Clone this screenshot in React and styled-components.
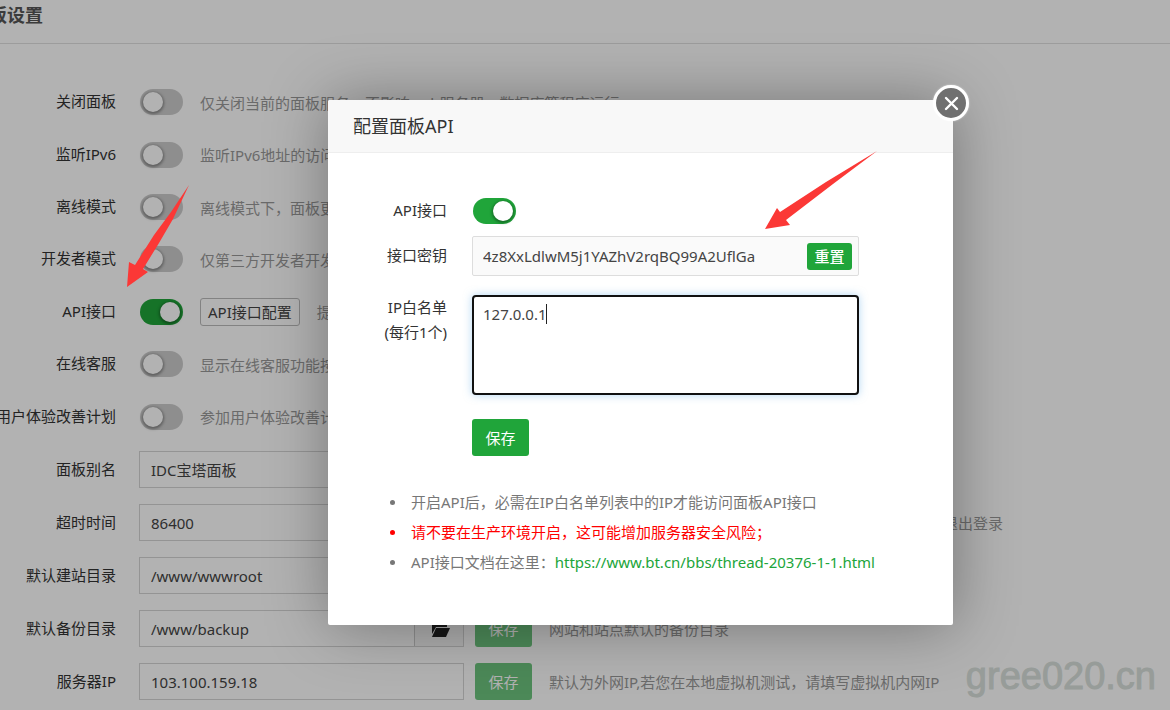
import React, { useState } from 'react';
import styled, { createGlobalStyle } from 'styled-components';

const GlobalStyle = createGlobalStyle`
  * {
    box-sizing: border-box;
  }
  body {
    margin: 0;
    background: #fff;
    color: #333;
    font-family: "Noto Sans", "Noto Sans CJK SC", sans-serif;
    font-size: 15px;
  }
  input, textarea, button {
    font: inherit;
  }
`;

const Page = styled.div`
  position: relative;
  height: 100vh;
  overflow: hidden;
`;

const PageHeader = styled.header`
  display: flex;
  height: 44px;
  border-bottom: 1px solid #e0e0e0;
`;

const PageTitle = styled.h1`
  display: flex;
  justify-content: flex-end;
  width: 43px;
  margin: 0;
  font-size: 18px;
  line-height: 30px;
  white-space: nowrap;
  color: #555;
`;

const Settings = styled.form`
  padding-top: 32px;
`;

const SwitchRows = styled.div`
  display: grid;
  grid-template-rows: repeat(7, 1fr);
  height: 367px;
`;

const Row = styled.div`
  display: flex;
  align-items: center;
  white-space: nowrap;
`;

const FieldRow = styled(Row)`
  height: 53px;
`;

const Label = styled.label`
  display: flex;
  justify-content: flex-end;
  flex: none;
  width: 116px;
  margin-right: 23px;
  padding-bottom: 2px;
  line-height: 24px;
`;

const Switch = styled.input.attrs({ type: 'checkbox' })`
  appearance: none;
  flex: none;
  display: flex;
  align-items: center;
  width: 43px;
  height: 26px;
  margin: 0 0 0 1px;
  padding: 0 3px;
  border-radius: 13px;
  background: #ccc;
  cursor: pointer;
  &::before {
    content: '';
    width: 20px;
    height: 20px;
    border-radius: 50%;
    background: #fff;
    box-shadow: 0 1px 3px 1px rgba(0, 0, 0, .35);
  }
  &:checked {
    justify-content: flex-end;
    background: #20a53a;
  }
`;

const Hint = styled.span`
  margin-left: 17px;
  color: #999;
`;

const ConfigButton = styled.button`
  height: 28px;
  margin-left: 17px;
  padding: 0 7px;
  border: 1px solid #bbb;
  border-radius: 3px;
  background: #fff;
  color: #444;
  line-height: 24px;
`;

const InputGroup = styled.div`
  display: flex;
  flex: none;
  width: 325px;
  height: 37px;
  border: 1px solid #d5d5d5;
`;

const TextInput = styled.input`
  flex: 1;
  min-width: 0;
  padding: 0 11px;
  border: 0;
  background: transparent;
  color: #444;
  outline: 0;
`;

const FolderButton = styled.button`
  display: flex;
  align-items: center;
  justify-content: center;
  width: 49px;
  padding: 0 0 0 4px;
  border: 0;
  border-left: 1px solid #ccc;
  background: #f8f8f8;
`;

const SaveButton = styled.button`
  flex: none;
  width: 57px;
  height: 37px;
  padding: 0 0 1px;
  border: 0;
  border-radius: 3px;
  background: #20a53a;
  color: #fff;
`;

const RowSaveButton = styled(SaveButton)`
  margin-left: 11px;
  opacity: .65;
`;

const Overlay = styled.div`
  position: absolute;
  inset: 0;
  display: flex;
  align-items: flex-start;
  justify-content: center;
  padding: 100px 0 0 111px;
  background: rgba(0, 0, 0, .3);
`;

const Dialog = styled.section`
  position: relative;
  width: 625px;
  padding-bottom: 48px;
  border-radius: 2px;
  background: #fff;
  box-shadow: 1px 1px 62px rgba(0, 0, 0, .35);
`;

const DialogTitle = styled.h2`
  height: 53px;
  margin: 0;
  padding: 0 25px;
  border-bottom: 1px solid #eee;
  border-radius: 2px 2px 0 0;
  background: #f8f8f8;
  font-size: 18px;
  font-weight: 400;
  line-height: 52px;
`;

const CloseButton = styled.button`
  position: absolute;
  top: -15px;
  right: -16px;
  display: flex;
  align-items: center;
  justify-content: center;
  width: 36px;
  height: 36px;
  padding: 0;
  border: 3px solid #fff;
  border-radius: 50%;
  background: #707070;
  box-shadow: 0 0 2px rgba(255, 255, 255, .6);
`;

const DialogForm = styled.form`
  display: grid;
  grid-template-columns: 119px 387px;
  column-gap: 25px;
  padding-top: 45px;
`;

const DialogLabel = styled.label`
  line-height: 25px;
  text-align: right;
`;

const KeyLabel = styled(DialogLabel)`
  padding-top: 19px;
`;

const WhitelistLabel = styled(DialogLabel)`
  padding-top: 19px;
`;

const KeyBox = styled.div`
  display: flex;
  align-items: center;
  height: 40px;
  margin-top: 12px;
  padding-right: 6px;
  border: 1px solid #ddd;
  border-radius: 2px;
  background: #fafafa;
`;

const KeyInput = styled(TextInput)`
  padding: 0 10px;
`;

const ResetButton = styled(SaveButton)`
  width: 45px;
  height: 27px;
  font-weight: 500;
`;

const WhitelistBox = styled.div`
  position: relative;
  height: 100px;
  margin-top: 19px;
`;

const Whitelist = styled.textarea`
  display: block;
  width: 100%;
  height: 100%;
  padding: 5px 9px;
  border: 2px solid #111;
  border-radius: 4px;
  color: #444;
  line-height: 24px;
  resize: none;
  outline: 0;
  caret-color: transparent;
  box-shadow: 0 0 9px rgba(102, 175, 233, .5);
`;

const Caret = styled.span`
  position: absolute;
  top: 9px;
  left: 74px;
  width: 1px;
  height: 20px;
  background: #222;
`;

const DialogSaveButton = styled(SaveButton)`
  grid-column: 2;
  margin-top: 24px;
`;

const Notes = styled.ul`
  margin: 31px 0 0;
  padding-left: 62px;
  line-height: 30px;
  list-style: none;
`;

const Note = styled.li`
  display: flex;
  align-items: center;
  color: ${props => props.$warning ? '#f00' : '#777'};
  &::before {
    content: '';
    width: 5px;
    height: 5px;
    margin-right: 16px;
    border-radius: 50%;
    background: currentColor;
  }
`;

const NoteLink = styled.a`
  color: #20a53a;
  text-decoration: none;
`;

const Arrows = styled.svg`
  position: absolute;
  top: 0;
  left: 0;
  width: 1170px;
  height: 710px;
  pointer-events: none;
`;

const Watermark = styled.span`
  position: absolute;
  right: 14px;
  bottom: 12px;
  color: #979c99;
  font-family: "Liberation Sans", sans-serif;
  font-size: 38px;
  line-height: 44px;
  -webkit-text-stroke: 1px #979c99;
`;

const switches = [
  { id: 'closePanel', label: '关闭面板', hint: '仅关闭当前的面板服务，不影响web服务器、数据库等程序运行' },
  { id: 'ipv6', label: '监听IPv6', hint: '监听IPv6地址的访问请求' },
  { id: 'offline', label: '离线模式', hint: '离线模式下，面板更新将停止' },
  { id: 'developer', label: '开发者模式', hint: '仅第三方开发者开发使用' },
  { id: 'api', label: 'API接口', hint: '提供面板API访问', on: true, config: 'API接口配置' },
  { id: 'service', label: '在线客服', hint: '显示在线客服功能按钮' },
  { id: 'improve', label: '用户体验改善计划', hint: '参加用户体验改善计划' }
];

const fields = [
  { id: 'alias', label: '面板别名', value: 'IDC宝塔面板', hint: '给面板取个别名' },
  { id: 'timeout', label: '超时时间', value: '86400', hint: '如果用户在 86400秒（24小时）没有操作面板，则系统自动退出登录' },
  { id: 'siteDir', label: '默认建站目录', value: '/www/wwwroot', hint: '新创建的站点默认目录', folder: true },
  { id: 'backupDir', label: '默认备份目录', value: '/www/backup', hint: '网站和站点默认的备份目录', folder: true },
  { id: 'serverIp', label: '服务器IP', value: '103.100.159.18', hint: '默认为外网IP,若您在本地虚拟机测试，请填写虚拟机内网IP' }
];

const FolderIcon = () => (
  <svg width="20" height="16" viewBox="0 0 20 16" fill="#222">
    <path d="M1 13V2h6l2 2h7v2H5z" />
    <path d="M5 7h14l-4 9H1z" />
  </svg>
);

const SwitchRow = ({ item }) => (
  <Row>
    <Label htmlFor={item.id}>{item.label}</Label>
    <Switch id={item.id} defaultChecked={item.on} />
    {item.config && <ConfigButton type="button">{item.config}</ConfigButton>}
    <Hint>{item.hint}</Hint>
  </Row>
);

const InputRow = ({ item }) => (
  <FieldRow>
    <Label htmlFor={item.id}>{item.label}</Label>
    <InputGroup>
      <TextInput id={item.id} defaultValue={item.value} />
      {item.folder && <FolderButton type="button" aria-label="选择目录"><FolderIcon /></FolderButton>}
    </InputGroup>
    <RowSaveButton type="button">保存</RowSaveButton>
    <Hint>{item.hint}</Hint>
  </FieldRow>
);

const ApiDialog = ({ onClose }) => (
  <Dialog role="dialog" aria-labelledby="apiTitle">
    <DialogTitle id="apiTitle">配置面板API</DialogTitle>
    <CloseButton type="button" aria-label="关闭" onClick={onClose}>
      <svg width="15" height="15" viewBox="0 0 15 15" stroke="#fff" strokeWidth="2.4" strokeLinecap="round">
        <path d="M2 2l11 11M13 2L2 13" />
      </svg>
    </CloseButton>
    <DialogForm onSubmit={e => e.preventDefault()}>
      <DialogLabel htmlFor="apiSwitch">API接口</DialogLabel>
      <Switch id="apiSwitch" defaultChecked />
      <KeyLabel htmlFor="apiKey">接口密钥</KeyLabel>
      <KeyBox>
        <KeyInput id="apiKey" readOnly value="4z8XxLdlwM5j1YAZhV2rqBQ99A2UflGa" />
        <ResetButton type="button">重置</ResetButton>
      </KeyBox>
      <WhitelistLabel htmlFor="whitelist">IP白名单<br />(每行1个)</WhitelistLabel>
      <WhitelistBox>
        <Whitelist id="whitelist" defaultValue="127.0.0.1" />
        <Caret />
      </WhitelistBox>
      <DialogSaveButton>保存</DialogSaveButton>
    </DialogForm>
    <Notes>
      <Note>开启API后，必需在IP白名单列表中的IP才能访问面板API接口</Note>
      <Note $warning>请不要在生产环境开启，这可能增加服务器安全风险；</Note>
      <Note>
        API接口文档在这里：
        <NoteLink href="https://www.bt.cn/bbs/thread-20376-1-1.html">https://www.bt.cn/bbs/thread-20376-1-1.html</NoteLink>
      </Note>
    </Notes>
  </Dialog>
);

export default function App() {
  const [open, setOpen] = useState(true);

  return (
    <Page>
      <GlobalStyle />
      <PageHeader>
        <PageTitle>面板设置</PageTitle>
      </PageHeader>
      <Settings onSubmit={e => e.preventDefault()}>
        <SwitchRows>
          {switches.map(item => <SwitchRow key={item.id} item={item} />)}
        </SwitchRows>
        {fields.map(item => <InputRow key={item.id} item={item} />)}
      </Settings>
      {open && (
        <Overlay>
          <ApiDialog onClose={() => setOpen(false)} />
        </Overlay>
      )}
      <Arrows viewBox="0 0 1170 710" fill="#fb3836">
        <path d="M189 185L171 212L154 235L135 265L129 262L127 287L148 272L143 269L159 243L173 219Z" />
        <path d="M877 151L826 182L780 212L777 208L765 229L790 225L786 220L833 184Z" />
      </Arrows>
      <Watermark>gree020.cn</Watermark>
    </Page>
  );
}
